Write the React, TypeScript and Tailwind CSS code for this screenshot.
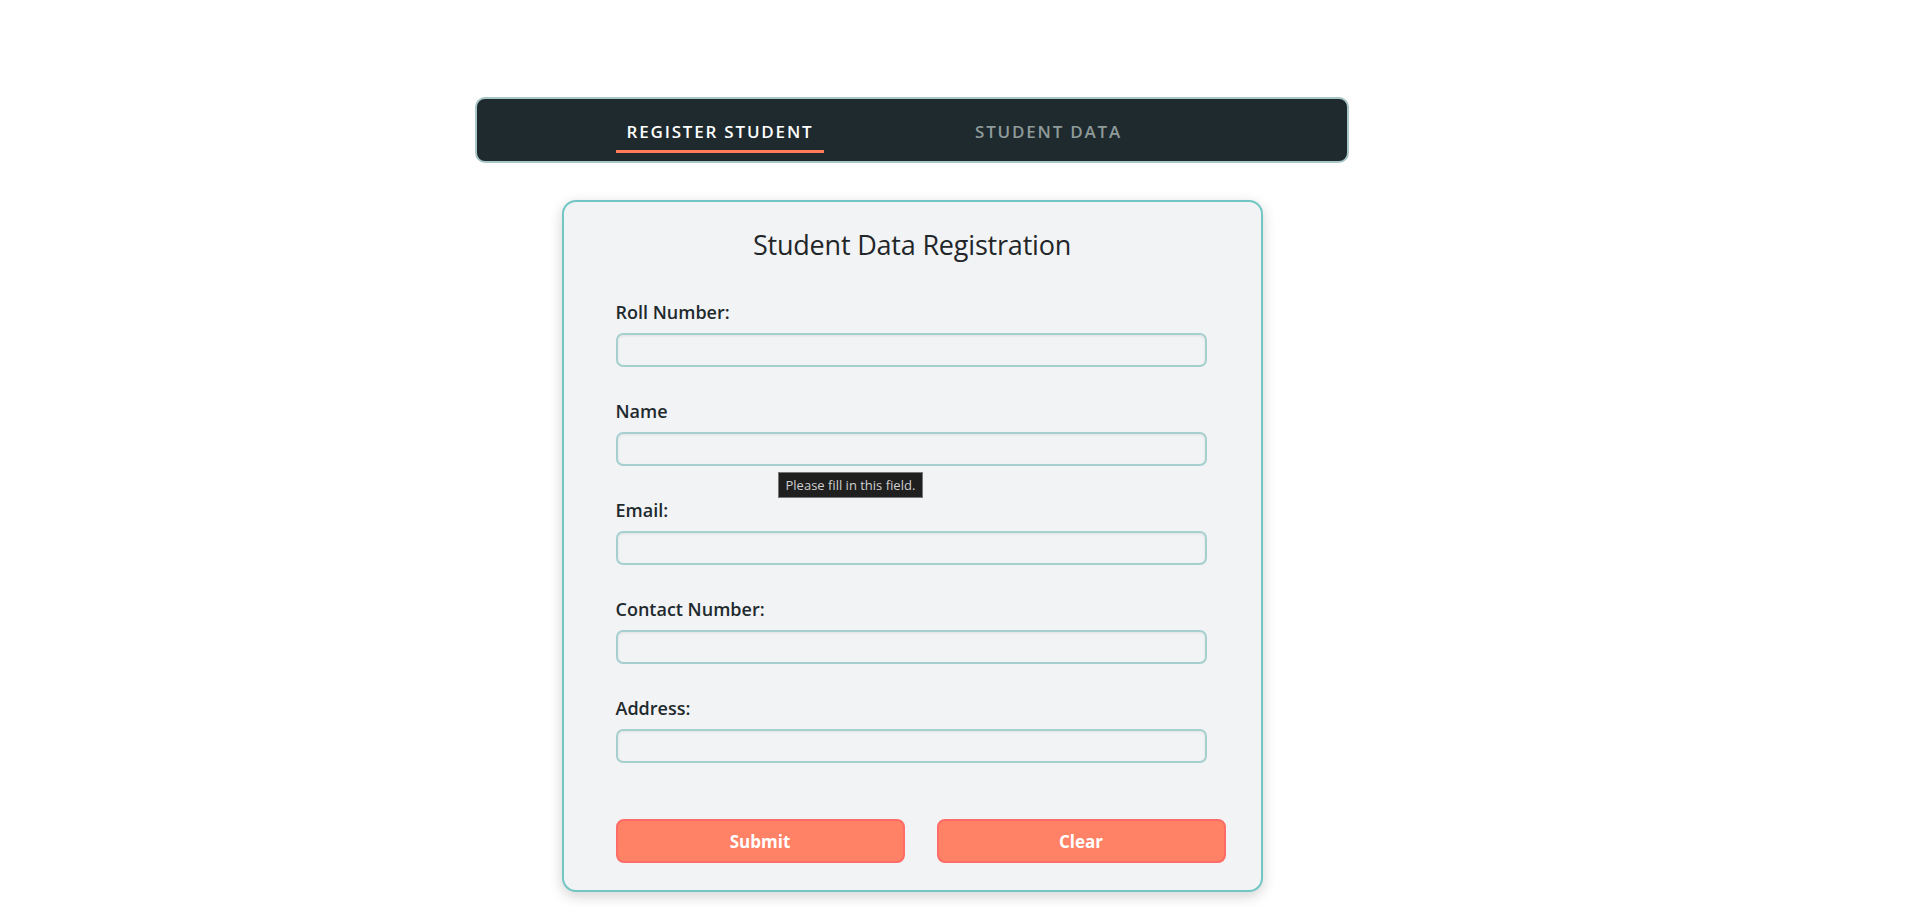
import React from "react";

const fields = ["Roll Number:", "Name", "Email:", "Contact Number:", "Address:"];

export default function App() {
  return (
    <div className="min-h-[907px] w-full bg-white" style={{ fontFamily: '"Open Sans", "Noto Sans", sans-serif' }}>
      <div className="w-[1824px] flex flex-col items-center pt-[97px]">
        <nav className="w-[874px] h-[66px] rounded-[10px] border-2 border-[#a9c6c6] bg-[#1e2a2d] flex items-stretch pl-[139px]">
          <div className="relative flex items-center px-[10px] w-[208px] justify-center">
            <span className="text-white text-[17px] font-semibold tracking-[1.8px] mt-[3px] whitespace-nowrap">REGISTER STUDENT</span>
            <div className="absolute left-0 right-0 bottom-[8px] h-[3px] bg-[#ff7a59]" />
          </div>
          <div className="flex items-center ml-[140px] px-[10px] w-[169px] justify-center">
            <span className="text-[#8f9a9a] text-[17px] font-semibold tracking-[1.8px] mt-[3px] whitespace-nowrap">STUDENT DATA</span>
          </div>
        </nav>

        <div className="relative mt-[37px] w-[701px] rounded-[14px] border-2 border-[#72c6c4] bg-[#f2f3f5] shadow-[0_4px_14px_rgba(0,0,0,0.18)] pl-[52px] pr-[34px] pt-[25px] pb-[27px]">
          <h1 className="text-center text-[27px] leading-[35px] text-[#222629] pr-[18px] tracking-[-0.2px]">Student Data Registration</h1>
          <div className="mt-[38px] flex flex-col">
            {fields.map((f) => (
              <div key={f} className="flex flex-col mb-[32px] last:mb-0 w-[591px]">
                <label className="text-[18px] leading-[24px] font-semibold text-[#1e2a2d]">{f}</label>
                <input
                  className="mt-[9px] h-[34px] rounded-[7px] border-2 border-[#a6d0cf] bg-[#f2f3f5] shadow-[inset_0_1px_3px_rgba(0,0,0,0.08)] outline-none"
                  type="text"
                />
              </div>
            ))}
          </div>
          <div className="mt-[56px] flex gap-[32px]">
            <button className="w-[289px] h-[44px] rounded-[8px] border-2 border-[#ff6b66] bg-[#ff8266] text-white text-[17px] font-bold pt-[2px]">Submit</button>
            <button className="w-[289px] h-[44px] rounded-[8px] border-2 border-[#ff6b66] bg-[#ff8266] text-white text-[17px] font-bold pt-[2px]">Clear</button>
          </div>
          <div className="absolute left-[214px] top-[270px] h-[26px] px-[7px] flex items-center bg-[#1f1f1f] border border-[#777] text-[#cfcfcf] text-[13px] leading-none whitespace-nowrap">
            Please fill in this field.
          </div>
        </div>
      </div>
    </div>
  );
}
